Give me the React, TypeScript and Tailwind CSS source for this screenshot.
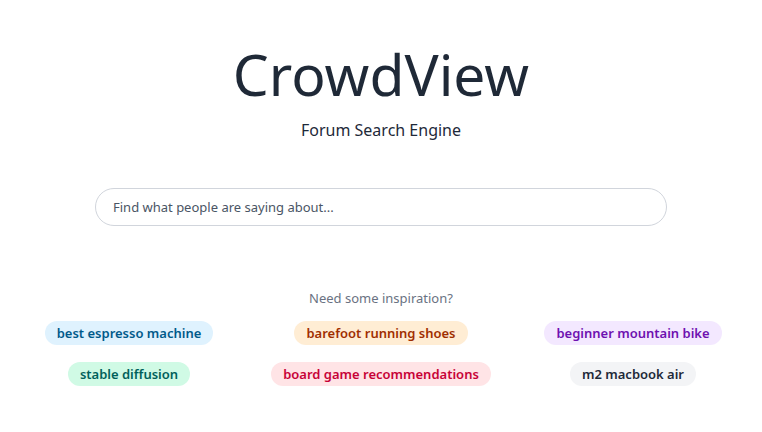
const chips = [
  { label: "best espresso machine", cls: "bg-sky-100 text-sky-800" },
  { label: "barefoot running shoes", cls: "bg-orange-100 text-orange-800" },
  { label: "beginner mountain bike", cls: "bg-purple-100 text-purple-800" },
  { label: "stable diffusion", cls: "bg-emerald-100 text-teal-800" },
  { label: "board game recommendations", cls: "bg-rose-100 text-rose-700" },
  { label: "m2 macbook air", cls: "bg-gray-100 text-gray-800" },
];

export default function App() {
  return (
    <div className="flex min-h-screen flex-col items-center bg-white font-['Open_Sans',sans-serif]">
      <h1 className="mt-[36px] text-[57px] leading-[76px] font-normal text-[#1f2937]">CrowdView</h1>
      <p className="mt-[6px] text-[16px] leading-6 text-gray-800">Forum Search Engine</p>
      <input
        className="mt-[46px] h-[38px] w-[572px] rounded-full border border-gray-300 px-[17px] text-[13px] text-gray-800 outline-none placeholder:text-gray-600"
        placeholder="Find what people are saying about..."
      />
      <p className="mt-[63px] text-[13px] text-gray-500">Need some inspiration?</p>
      <div className="mt-[12px] grid w-[756px] grid-cols-3 gap-y-[17px]">
        {chips.map((c) => (
          <div key={c.label} className="flex justify-center">
            <span className={`rounded-full px-3 py-[2px] text-[13px] leading-5 font-semibold ${c.cls}`}>{c.label}</span>
          </div>
        ))}
      </div>
    </div>
  );
}
